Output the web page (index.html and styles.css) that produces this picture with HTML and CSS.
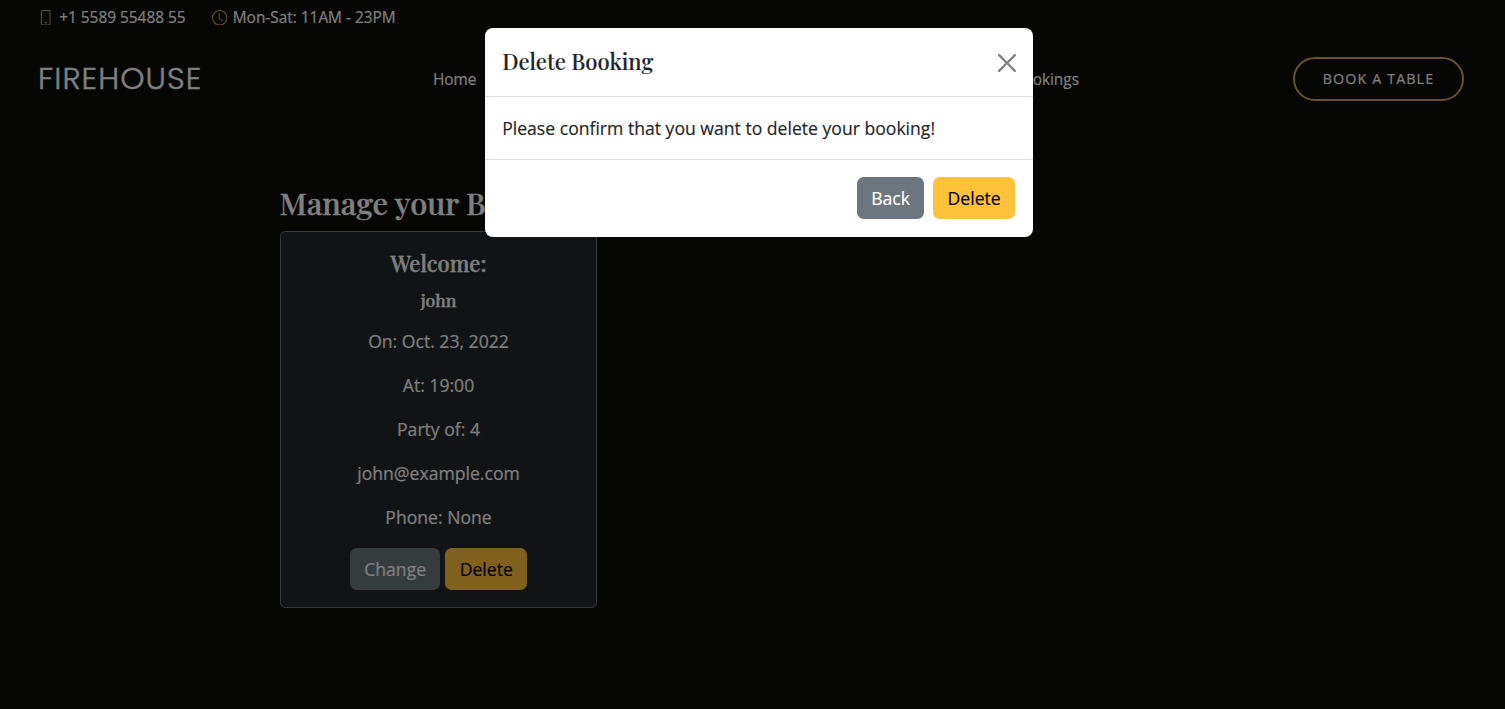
FILE: index.html
```html
<!DOCTYPE html>
<html lang="en">
<head>
<meta charset="utf-8">
<title>Firehouse</title>
<link rel="stylesheet" href="styles.css">
</head>
<body>
<div class="topbar">
  <span class="contact"><svg class="icon" viewBox="0 0 16 16"><path d="M11 1a1 1 0 0 1 1 1v12a1 1 0 0 1-1 1H5a1 1 0 0 1-1-1V2a1 1 0 0 1 1-1h6zM5 0a2 2 0 0 0-2 2v12a2 2 0 0 0 2 2h6a2 2 0 0 0 2-2V2a2 2 0 0 0-2-2H5z"/><path d="M8 14a1 1 0 1 0 0-2 1 1 0 0 0 0 2z"/></svg><span class="contact-text">+1 5589 55488 55</span></span>
  <span class="contact"><svg class="icon" viewBox="0 0 16 16"><path d="M8 3.5a.5.5 0 0 0-1 0V9a.5.5 0 0 0 .252.434l3.5 2a.5.5 0 0 0 .496-.868L8 8.71V3.5z"/><path d="M8 16A8 8 0 1 0 8 0a8 8 0 0 0 0 16zm7-8A7 7 0 1 1 1 8a7 7 0 0 1 14 0z"/></svg><span class="contact-text">Mon-Sat: 11AM - 23PM</span></span>
</div>
<header class="header">
  <div class="logo">FIREHOUSE</div>
  <nav class="nav"><a>Home</a><a>Bookings</a></nav>
  <a class="book">BOOK A TABLE</a>
</header>
<main class="main">
  <h2 class="heading">Manage your Bookings</h2>
  <section class="card">
    <h5 class="card-title">Welcome:</h5>
    <h6 class="card-name">john</h6>
    <p>On: Oct. 23, 2022</p>
    <p>At: 19:00</p>
    <p>Party of: 4</p>
    <p>john@example.com</p>
    <p>Phone: None</p>
    <div class="actions"><button class="btn btn-grey">Change</button><button class="btn btn-yellow">Delete</button></div>
  </section>
</main>
<div class="backdrop">
  <div class="modal">
    <div class="modal-header">
      <h5 class="modal-title">Delete Booking</h5>
      <svg class="close" viewBox="0 0 16 16"><path d="M.293.293a1 1 0 0 1 1.414 0L8 6.586 14.293.293a1 1 0 1 1 1.414 1.414L9.414 8l6.293 6.293a1 1 0 0 1-1.414 1.414L8 9.414l-6.293 6.293a1 1 0 0 1-1.414-1.414L6.586 8 .293 1.707a1 1 0 0 1 0-1.414z"/></svg>
    </div>
    <div class="modal-body">Please confirm that you want to delete your booking!</div>
    <div class="modal-footer"><button class="btn btn-grey">Back</button><button class="btn btn-yellow">Delete</button></div>
  </div>
</div>
</body>
</html>
```
FILE: styles.css
```css
* { box-sizing: border-box; }
body {
  margin: 0;
  height: 709px;
  overflow: hidden;
  background: #0c0c08;
  color: #fff;
  font: 17.6px/26.4px "Open Sans", sans-serif;
  -webkit-text-stroke: .15px currentColor;
}
h2, h5, h6, p { margin: 0; }
.topbar {
  display: flex;
  gap: 26px;
  height: 35px;
  padding-left: 38px;
  align-items: center;
  font-size: 15.4px;
}
.contact { display: flex; align-items: center; gap: 5.8px; }
.contact-text { padding-top: 1px; }
.icon { width: 15.4px; height: 15.4px; fill: #cda45e; }
.header {
  display: flex;
  align-items: center;
  height: 88px;
  padding: 0 41px 0 38px;
}
.logo {
  width: 395px;
  font: 300 30.8px/40px Poppins, Lato, sans-serif;
  letter-spacing: 1.1px;
  -webkit-text-stroke-width: .4px;
}
.nav {
  display: flex;
  justify-content: space-between;
  width: 646px;
  padding-top: 2px;
  font-size: 15.4px;
}
.book {
  display: flex;
  align-items: center;
  justify-content: center;
  width: 171px;
  height: 44px;
  margin-left: auto;
  border: 2px solid #cda45e;
  border-radius: 55px;
  font-size: 14.3px;
  letter-spacing: 1.1px;
}
.main { padding: 61px 0 0 280px; }
.heading, .card-title, .card-name, .modal-title {
  font-family: "Playfair Display", "Liberation Serif", serif;
  font-weight: 500;
}
.heading, .card-title, .card-name { -webkit-text-stroke-width: .4px; }
.heading {
  height: 47px;
  margin-left: -.5px;
  font-size: 30.8px;
  line-height: 38px;
  white-space: nowrap;
}
.card {
  width: 317px;
  height: 377px;
  padding: 17px;
  border: 1px solid #6c757d;
  border-radius: 5.5px;
  background: #25272a;
  text-align: center;
}
.card-title { font-size: 22px; line-height: 28px; margin-bottom: 11px; }
.card-name { font-size: 17.6px; line-height: 23px; margin-bottom: 17px; }
.card p { margin-bottom: 17.6px; }
.actions { display: flex; justify-content: center; gap: 5px; }
.btn {
  height: 42px;
  padding: 0 14.3px;
  border: 0;
  border-radius: 6.6px;
  font: 17.6px/26.4px "Open Sans", sans-serif;
}
.btn-grey { background: #6d767c; color: #fff; }
.btn-yellow { background: #ffc23a; color: #000; }
.backdrop {
  position: absolute;
  inset: 0;
  padding: 28px 0 0 485px;
  background: rgba(0, 0, 0, .5);
}
.modal {
  width: 548px;
  height: 209px;
  border-radius: 8px;
  background: #fff;
  color: #212529;
}
.modal-header {
  display: flex;
  align-items: center;
  justify-content: space-between;
  height: 69px;
  padding: 0 17px 0 17.2px;
  border-bottom: 1px solid #dee2e6;
}
.modal-title { font-size: 22px; line-height: 30px; padding-bottom: 2px; }
.close { width: 18px; height: 20px; padding-top: 2px; fill: #000; opacity: .5; }
.modal-body { height: 63px; padding: 18px 17.2px; border-bottom: 1px solid #dee2e6; }
.modal-footer { display: flex; justify-content: flex-end; gap: 9px; padding: 17px 18px; }
```
